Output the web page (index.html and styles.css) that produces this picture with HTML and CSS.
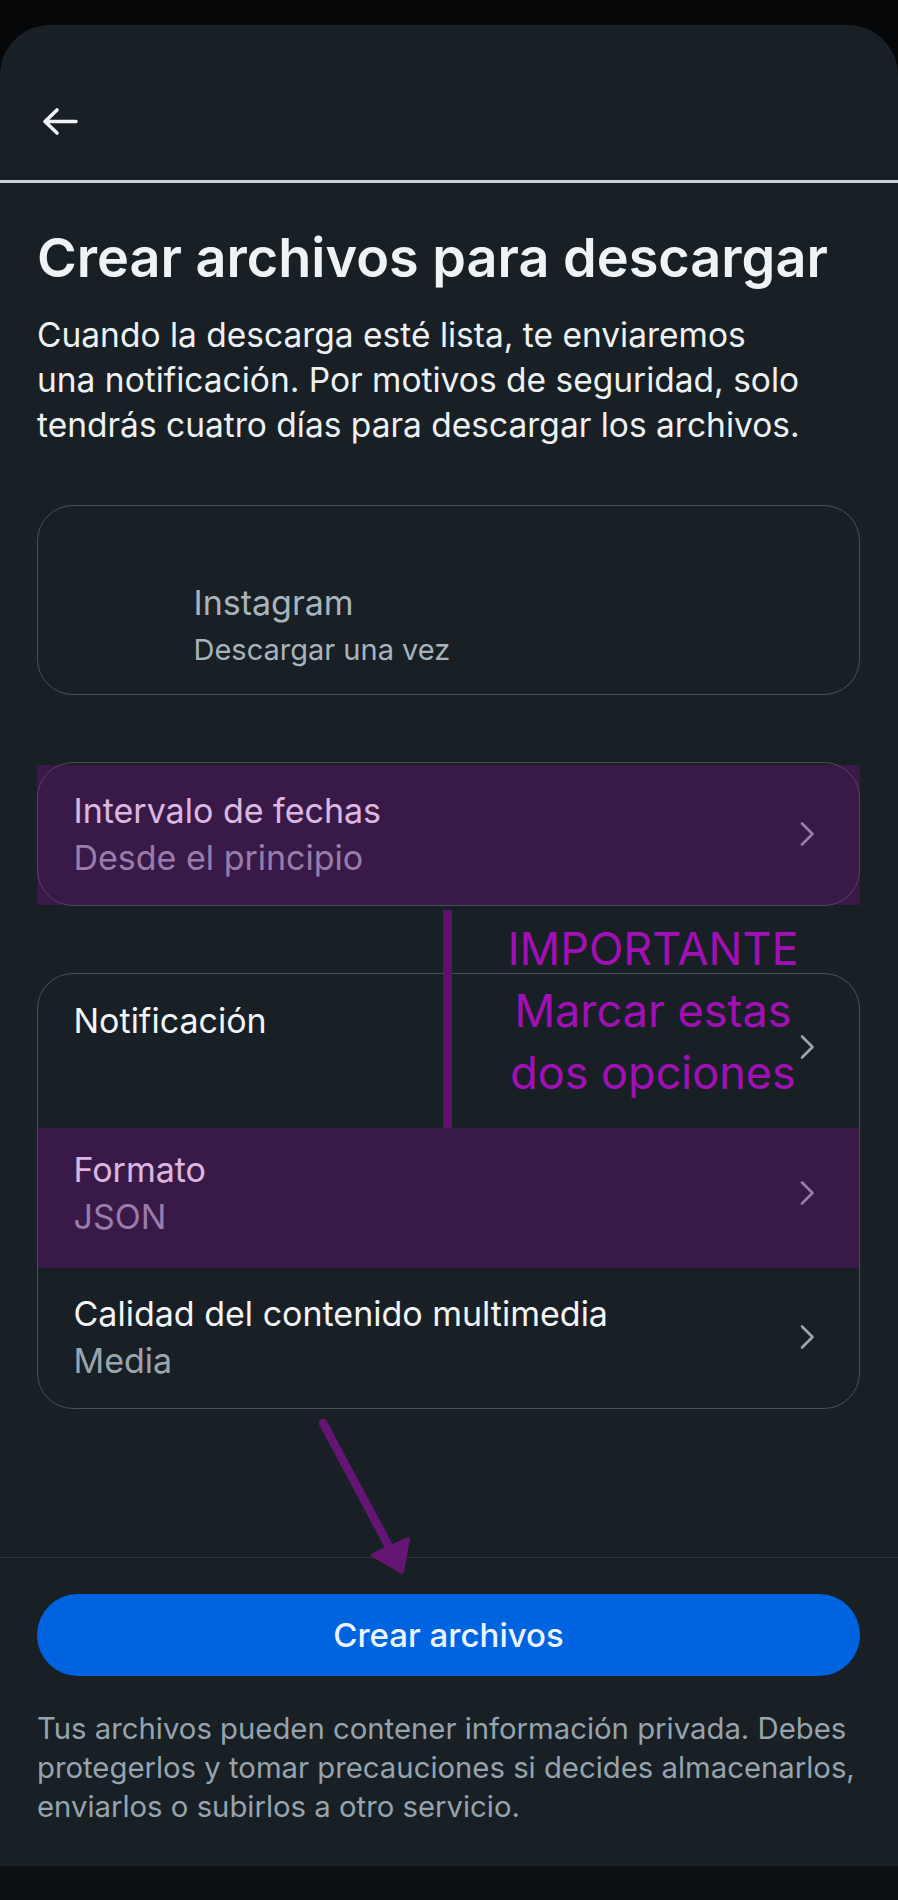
FILE: index.html
```html
<!DOCTYPE html>
<html lang="es">
<head>
<meta charset="utf-8">
<title>Crear archivos para descargar</title>
<link rel="stylesheet" href="styles.css">
</head>
<body>
<div class="device">
  <div class="sheet">
    <header class="topbar">
      <svg class="back" width="38" height="29" viewBox="0 0 38 29" aria-label="Atrás">
        <path d="M4 14.5 H35 M16 3 L4 14.5 L16 26" fill="none" stroke="#f1f4f6" stroke-width="3.6" stroke-linecap="round" stroke-linejoin="round"/>
      </svg>
    </header>
    <div class="rule"></div>

    <main class="main">
      <h1 class="title">Crear archivos para descargar</h1>
      <p class="lead">Cuando la descarga esté lista, te enviaremos<br>una notificación. Por motivos de seguridad, solo<br>tendrás cuatro días para descargar los archivos.</p>

      <section class="card account">
        <div class="account-text">
          <div class="account-name">Instagram</div>
          <div class="account-sub">Descargar una vez</div>
        </div>
      </section>

      <section class="card card-range">
        <div class="row row-single">
          <div class="row-text">
            <div class="row-title">Intervalo de fechas</div>
            <div class="row-sub">Desde el principio</div>
          </div>
          <svg class="chev" width="16" height="26" viewBox="0 0 16 26"><path d="M3 2.5 L13.5 13 L3 23.5" fill="none" stroke="#9aa5ae" stroke-width="2.6" stroke-linecap="round" stroke-linejoin="round"/></svg>
        </div>
        <div class="hl hl-range"></div>
      </section>

      <section class="card card-list">
        <div class="row row-1">
          <div class="row-text solo">
            <div class="row-title">Notificación</div>
          </div>
          <svg class="chev" width="16" height="26" viewBox="0 0 16 26"><path d="M3 2.5 L13.5 13 L3 23.5" fill="none" stroke="#9aa5ae" stroke-width="2.6" stroke-linecap="round" stroke-linejoin="round"/></svg>
        </div>
        <div class="row row-2">
          <div class="row-text">
            <div class="row-title">Formato</div>
            <div class="row-sub">JSON</div>
          </div>
          <svg class="chev" width="16" height="26" viewBox="0 0 16 26"><path d="M3 2.5 L13.5 13 L3 23.5" fill="none" stroke="#9aa5ae" stroke-width="2.6" stroke-linecap="round" stroke-linejoin="round"/></svg>
          <div class="hl hl-format"></div>
        </div>
        <div class="row row-3">
          <div class="row-text">
            <div class="row-title">Calidad del contenido multimedia</div>
            <div class="row-sub">Media</div>
          </div>
          <svg class="chev" width="16" height="26" viewBox="0 0 16 26"><path d="M3 2.5 L13.5 13 L3 23.5" fill="none" stroke="#9aa5ae" stroke-width="2.6" stroke-linecap="round" stroke-linejoin="round"/></svg>
        </div>
      </section>
    </main>

    <footer class="footer">
      <button class="primary" type="button">Crear archivos</button>
      <p class="note">Tus archivos pueden contener información privada. Debes<br>protegerlos y tomar precauciones si decides almacenarlos,<br>enviarlos o subirlos a otro servicio.</p>
    </footer>
  </div>
  <div class="bottom-band"></div>

  <!-- annotations drawn over the screenshot -->
  <div class="mark-line"></div>
  <div class="mark-text">IMPORTANTE<br>Marcar estas<br>dos opciones</div>
  <svg class="mark-arrow" width="110" height="175" viewBox="0 0 110 175">
    <path d="M13 13 L83 144" fill="none" stroke="#651573" stroke-width="8.5" stroke-linecap="round"/>
    <path d="M63 145 L98 129 L92 162 Z" fill="#651573" stroke="#651573" stroke-width="4" stroke-linejoin="round"/>
  </svg>
</div>
</body>
</html>
```
FILE: styles.css
```css
* { box-sizing: border-box; }

html, body {
  margin: 0;
  padding: 0;
  background: #050709;
}

body {
  font-family: "Inter", "Noto Sans", "Liberation Sans", sans-serif;
  color: #eff2f4;
}

.device {
  position: relative;
  width: 898px;
  height: 1900px;
  overflow: hidden;
}

.sheet {
  margin-top: 25px;
  background: #182026;
  border-radius: 50px 50px 0 0;
  display: flex;
  flex-direction: column;
}

.topbar {
  height: 155px;
  padding: 82px 0 0 41px;
}

.back { display: block; }

.rule {
  height: 3px;
  background: #cdd2d6;
}

.main {
  padding: 43px 38px 0 37px;
  display: flex;
  flex-direction: column;
}

.title {
  margin: 0;
  font-size: 54px;
  line-height: 64px;
  font-weight: 600;
  color: #f0f3f5;
  white-space: nowrap;
}

.lead {
  margin: 23px 0 0;
  font-size: 33.5px;
  line-height: 45px;
  font-weight: 400;
  color: #eef1f3;
  white-space: nowrap;
}

.card {
  position: relative;
  border: 1.5px solid #45515a;
  border-radius: 36px;
}

.account {
  margin-top: 57px;
  height: 190px;
  padding: 73.5px 0 0 155.5px;
}

.account-name {
  font-size: 34px;
  line-height: 45px;
  color: #a9b3bb;
}

.account-sub {
  margin-top: 2px;
  font-size: 29px;
  line-height: 45px;
  color: #a9b3bb;
}

.card-range {
  margin-top: 67px;
}

.card-list {
  margin-top: 67px;
}

.row {
  position: relative;
  display: flex;
  align-items: center;
  height: 146px;
  padding: 0 44px 0 35.5px;
}

.row-single { height: 142px; }
.row-3 { height: 142px; }

.row-text {
  flex: 1;
  min-width: 0;
}

.row-text.solo { padding-bottom: 54px; }

.row-title {
  font-size: 34px;
  line-height: 47px;
  color: #f2f4f6;
  white-space: nowrap;
}

.row-sub {
  font-size: 34px;
  line-height: 47px;
  color: #9aa5ae;
}

.chev {
  flex: none;
  display: block;
}

.footer {
  margin-top: 148px;
  border-top: 1.5px solid #2f383f;
  padding: 36px 38px 40px 37px;
  display: flex;
  flex-direction: column;
}

.primary {
  height: 82px;
  width: 100%;
  border: 0;
  border-radius: 41px;
  background: #0064e0;
  color: #eef4ff;
  font-family: inherit;
  font-size: 33px;
  font-weight: 500;
  padding: 0;
}

.note {
  margin: 33px 0 0;
  font-size: 29.3px;
  line-height: 39px;
  color: #97a3ad;
  white-space: nowrap;
}

.bottom-band {
  height: 40px;
  background: #0d1014;
}

/* annotation overlays */
.hl {
  position: absolute;
  background: rgba(153, 9, 167, 0.26);
  pointer-events: none;
}

.hl-range { top: 1.5px; left: -1.5px; right: -0.5px; bottom: 0.5px; }
.hl-format { top: 7.5px; left: -1.5px; right: -0.5px; bottom: -1.5px; }

.mark-line {
  position: absolute;
  left: 443px;
  top: 910px;
  width: 9px;
  height: 218px;
  background: #5f106d;
}

.mark-text {
  position: absolute;
  left: 498px;
  top: 918px;
  width: 310px;
  text-align: center;
  font-size: 45px;
  line-height: 62px;
  color: #a30fb7;
  white-space: nowrap;
}

.mark-arrow {
  position: absolute;
  left: 310px;
  top: 1410px;
}
```
